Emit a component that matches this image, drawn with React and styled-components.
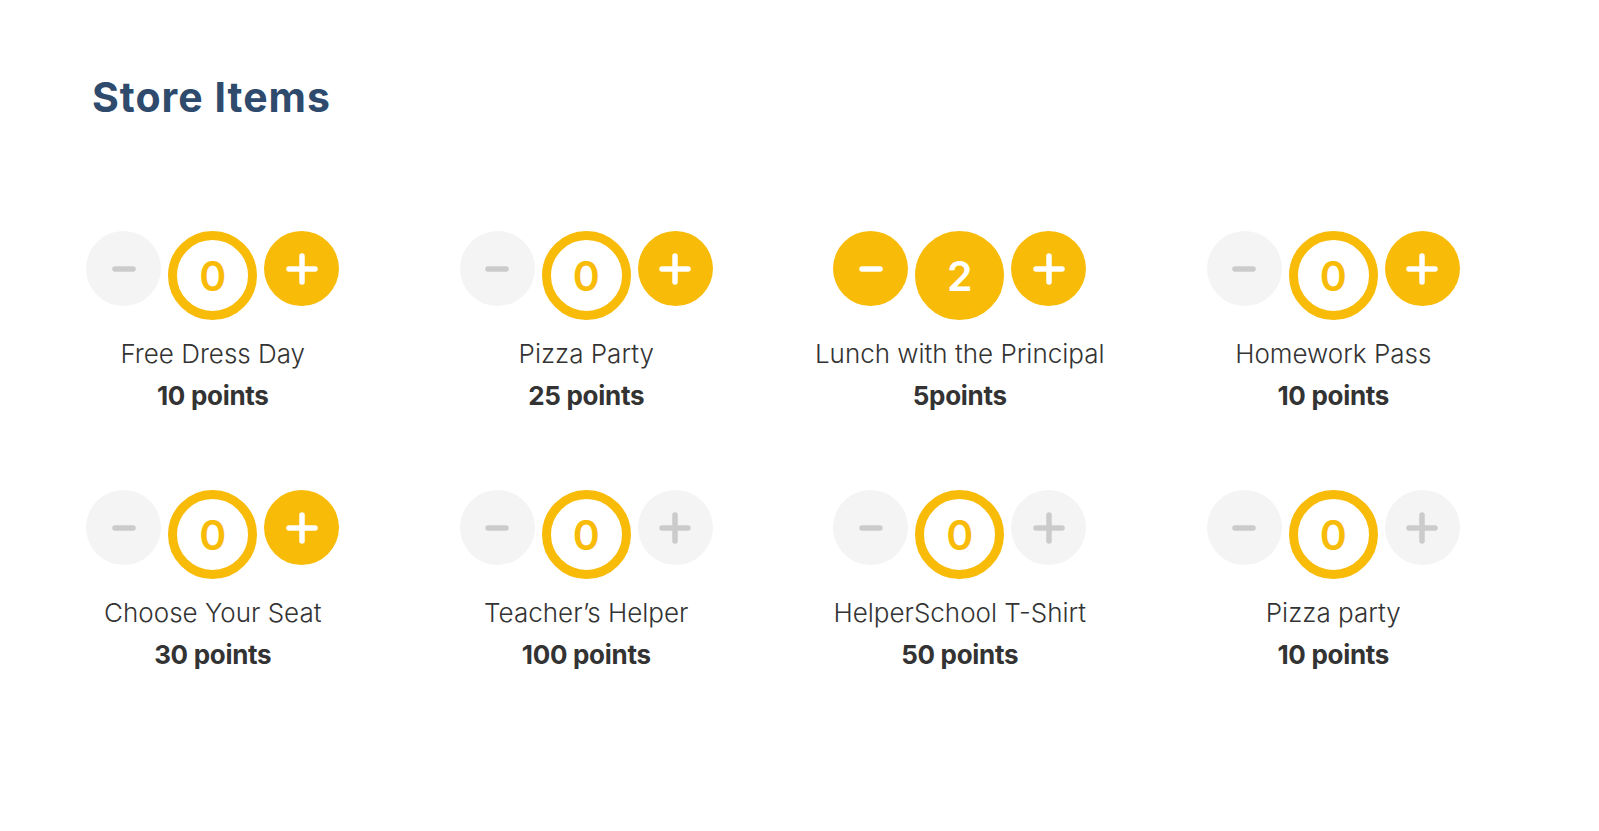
import React, { useState } from "react";
import styled, { createGlobalStyle } from "styled-components";

const GlobalStyle = createGlobalStyle`
  html, body {
    margin: 0;
    padding: 0;
    background: #ffffff;
    font-family: "Inter", "Noto Sans", sans-serif;
  }
`;

const items = [
  { name: "Free Dress Day", points: "10 points", count: 0 },
  { name: "Pizza Party", points: "25 points", count: 0 },
  { name: "Lunch with the Principal", points: "5points", count: 2 },
  { name: "Homework Pass", points: "10 points", count: 0 },
  { name: "Choose Your Seat", points: "30 points", count: 0 },
  { name: "Teacher’s Helper", points: "100 points", count: 0, locked: true },
  { name: "HelperSchool T-Shirt", points: "50 points", count: 0, locked: true },
  { name: "Pizza party", points: "10 points", count: 0, locked: true },
];

function MinusIcon({ color }) {
  return (
    <svg width="24" height="6" viewBox="0 0 24 6">
      <line x1="3" y1="3" x2="21" y2="3" stroke={color} strokeWidth="5.5" strokeLinecap="round" />
    </svg>
  );
}

function PlusIcon({ color }) {
  return (
    <svg width="32" height="32" viewBox="0 0 32 32">
      <line x1="3" y1="16" x2="29" y2="16" stroke={color} strokeWidth="5.5" strokeLinecap="round" />
      <line x1="16" y1="3" x2="16" y2="29" stroke={color} strokeWidth="5.5" strokeLinecap="round" />
    </svg>
  );
}

function StoreItem({ item }) {
  const [count, setCount] = useState(item.count);
  const canMinus = count > 0;
  const canPlus = !item.locked;
  return (
    <Item>
      <Controls>
        <RoundButton $active={canMinus} onClick={() => canMinus && setCount(count - 1)}>
          <MinusIcon color={canMinus ? "#ffffff" : "#cbcbcb"} />
        </RoundButton>
        <Count $filled={count > 0}>{count}</Count>
        <RoundButton $active={canPlus} onClick={() => canPlus && setCount(count + 1)}>
          <PlusIcon color={canPlus ? "#ffffff" : "#cbcbcb"} />
        </RoundButton>
      </Controls>
      <Name>{item.name}</Name>
      <Points>{item.points}</Points>
    </Item>
  );
}

export default function App() {
  return (
    <Page>
      <GlobalStyle />
      <Title>Store Items</Title>
      <Grid>
        {items.map((item, i) => (
          <StoreItem key={i} item={item} />
        ))}
      </Grid>
    </Page>
  );
}

const Page = styled.div`
  padding: 72px 0 0 0;
`;

const Title = styled.h1`
  margin: 0 0 0 92px;
  font-size: 41px;
  font-weight: 700;
  line-height: 50px;
  letter-spacing: 1px;
  color: #2e4a6c;
`;

const Grid = styled.div`
  display: grid;
  grid-template-columns: repeat(4, 373.5px);
  row-gap: 74px;
  margin: 109px 0 0 26px;
`;

const Item = styled.div`
  display: flex;
  flex-direction: column;
  align-items: center;
`;

const Controls = styled.div`
  display: flex;
  align-items: flex-start;
  gap: 7px;
  height: 89px;
`;

const RoundButton = styled.button`
  width: 75px;
  height: 75px;
  border-radius: 50%;
  border: none;
  padding: 0;
  display: flex;
  align-items: center;
  justify-content: center;
  background: ${(p) => (p.$active ? "#f8bb08" : "#f4f4f4")};
  cursor: ${(p) => (p.$active ? "pointer" : "default")};
`;

const Count = styled.div`
  box-sizing: border-box;
  width: 89px;
  height: 89px;
  border-radius: 50%;
  border: 9px solid #f8bb08;
  background: ${(p) => (p.$filled ? "#f8bb08" : "#ffffff")};
  color: ${(p) => (p.$filled ? "#ffffff" : "#f8bb08")};
  display: flex;
  align-items: center;
  justify-content: center;
  font-size: 41px;
  font-weight: 600;
  line-height: 1;
  padding-top: 2px;
`;

const Name = styled.div`
  margin-top: 14px;
  font-size: 26px;
  font-weight: 300;
  line-height: 40px;
  letter-spacing: 0px;
  color: #333333;
`;

const Points = styled.div`
  margin-top: 2px;
  font-size: 26px;
  font-weight: 700;
  line-height: 40px;
  letter-spacing: -0.3px;
  color: #333333;
`;
